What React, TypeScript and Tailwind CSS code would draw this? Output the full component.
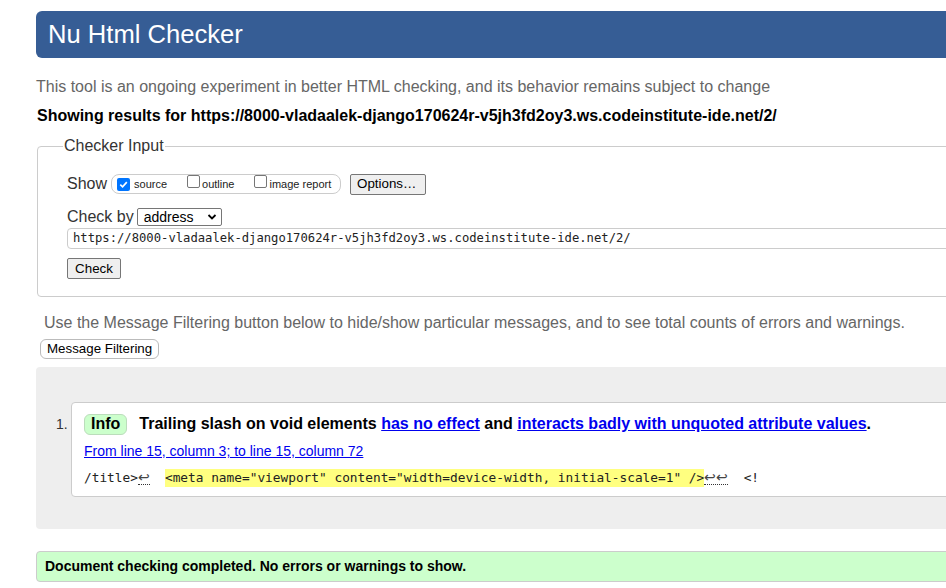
const sans = { fontFamily: '"Liberation Sans", Arial, sans-serif' }
const mono = { fontFamily: '"DejaVu Sans Mono", monospace' }

function Checkbox({ checked }: { checked?: boolean }) {
  return checked ? (
    <span className="inline-flex w-[13px] h-[13px] rounded-[2px] bg-[#0075ff] items-center justify-center shrink-0">
      <svg viewBox="0 0 12 12" className="w-[11px] h-[11px]">
        <path d="M2.5 6.2 L5 8.6 L9.6 3.4" fill="none" stroke="white" strokeWidth="1.8" />
      </svg>
    </span>
  ) : (
    <span className="inline-block w-[13px] h-[13px] rounded-[2px] border border-[#767676] bg-white shrink-0" />
  )
}

function Btn({ children, className = '' }: { children: React.ReactNode; className?: string }) {
  return (
    <span
      className={`inline-flex items-center px-[6px] h-[21px] text-[13.33px] text-black bg-[#efefef] border border-[#767676] rounded-[2px] ${className}`}
    >
      {children}
    </span>
  )
}

// line-break marker shown in the extract
function Lf({ n = 1 }: { n?: number }) {
  return (
    <span className="text-[#444] border-b border-dotted border-[#333] leading-[14px] text-[14px]" style={sans}>
      {'↩'.repeat(n)}
    </span>
  )
}

export default function App() {
  return (
    <div className="w-[946px] h-[588px] overflow-hidden bg-white text-black" style={sans}>
      <div className="ml-[36px] w-[1000px] pt-[11px]">
        {/* Header */}
        <div className="h-[47px] bg-[#365d95] rounded-l-[6px] flex items-center pl-[12px]">
          <h1 className="text-[25.6px] text-white leading-none mt-[1px]">Nu Html Checker</h1>
        </div>

        <p className="mt-[20px] text-[16px] text-[#666] leading-[18px]">
          This tool is an ongoing experiment in better HTML checking, and its behavior remains subject to change
        </p>
        <p className="mt-[11px] ml-[1px] text-[16px] font-bold leading-[18px]">
          Showing results for https://8000-vladaalek-django170624r-v5jh3fd2oy3.ws.codeinstitute-ide.net/2/
        </p>

        {/* Checker input */}
        <fieldset className="mt-[12px] ml-[1px] border border-[#ccc] rounded-l-[4px] pl-[29px] pb-[16px] pt-[4px]">
          <legend className="text-[16px] text-[#333] ml-[-4px] px-[1px] leading-[18px]">Checker Input</legend>
          <div className="flex items-center h-[22px] mt-[14px]">
            <span className="text-[16px] text-[#333] mr-[4px]">Show</span>
            <span className="inline-flex items-center h-[20px] w-[230px] border border-[#ccc] rounded-[8px] pl-[5px] text-[11px] text-[#222]">
              <Checkbox checked />
              <span className="ml-[4px]">source</span>
              <span className="ml-[20px]">
                <Checkbox />
              </span>
              <span className="ml-[2px]">outline</span>
              <span className="ml-[20px]">
                <Checkbox />
              </span>
              <span className="ml-[2px]">image report</span>
            </span>
            <Btn className="ml-[9px] w-[76px]">Options…</Btn>
          </div>
          <div className="flex items-center mt-[12px] h-[20px]">
            <span className="text-[16px] text-[#333] mr-[3px]">Check by</span>
            <span className="inline-flex items-center justify-between w-[85px] h-[18px] border border-[#767676] rounded-[2px] pl-[6px] pr-[4px] text-[14px]">
              address
              <svg viewBox="0 0 10 10" className="w-[10px] h-[10px]">
                <path d="M1.5 3 L5 6.5 L8.5 3" fill="none" stroke="black" strokeWidth="1.8" />
              </svg>
            </span>
          </div>
          <div
            className="mt-[1px] h-[21px] border border-[#ccc] rounded-l-[4px] flex items-center pl-[5px] text-[12.2px] text-[#222]"
            style={mono}
          >
            https://8000-vladaalek-django170624r-v5jh3fd2oy3.ws.codeinstitute-ide.net/2/
          </div>
          <Btn className="mt-[9px] w-[54px] justify-center">Check</Btn>
        </fieldset>

        <p className="mt-[17px] ml-[8px] text-[16px] text-[#666] leading-[18px]">
          Use the Message Filtering button below to hide/show particular messages, and to see total counts of errors and warnings.
        </p>
        <div className="mt-[4px] ml-[4px]">
          <span className="inline-flex items-center h-[20px] px-[6px] border border-[#bbb] rounded-[6px] text-[13.33px] bg-white">
            Message Filtering
          </span>
        </div>

        {/* Results */}
        <div className="mt-[7px] bg-[#eee] rounded-l-[4px] h-[162px] pt-[35px] pl-[20px] flex">
          <span className="text-[14px] text-[#333] w-[15px] mt-[12px]">1.</span>
          <div className="bg-white border border-[#ccc] rounded-l-[4px] h-[95px] flex-1 pl-[12px] pt-[11px]">
            <div className="flex items-center h-[21px]">
              <span className="inline-flex items-center h-[21px] px-[6px] bg-[#ccffcc] border border-[#bbddbb] rounded-[6px] text-[16px] font-bold">
                Info
              </span>
              <span className="ml-[12px] text-[16px] font-bold">
                Trailing slash on void elements{' '}
                <span className="text-[#0000ee] underline">has no effect</span> and{' '}
                <span className="text-[#0000ee] underline">interacts badly with unquoted attribute values</span>.
              </span>
            </div>
            <div className="mt-[8px] text-[14px] text-[#0000ee] underline leading-[16px]">
              From line 15, column 3; to line 15, column 72
            </div>
            <div className="mt-[10px] flex items-center text-[12.8px] text-[#222] h-[18px] whitespace-pre" style={mono}>
              <span>/title&gt;</span>
              <Lf />
              <span className="ml-[15px] bg-[#ffff80] leading-[18px]">
                &lt;meta name="viewport" content="width=device-width, initial-scale=1" /&gt;
              </span>
              <Lf n={2} />
              <span>  &lt;!</span>
            </div>
          </div>
        </div>

        {/* Done */}
        <div className="mt-[22px] h-[31px] bg-[#ccffcc] border border-[#ccc] rounded-l-[4px] flex items-center pl-[8px] text-[14px] font-bold">
          Document checking completed. No errors or warnings to show.
        </div>
      </div>
    </div>
  )
}
